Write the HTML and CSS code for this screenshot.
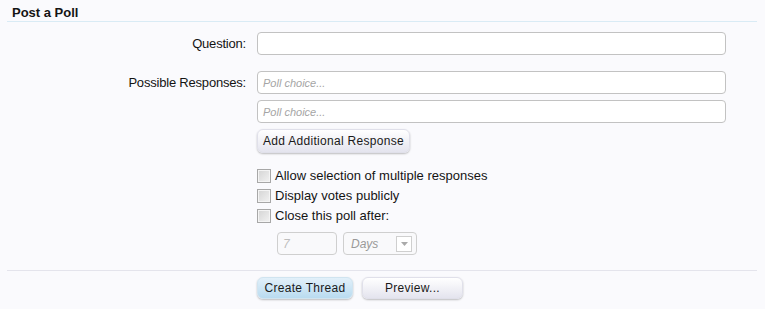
FILE: index.html
```html
<!DOCTYPE html>
<html>
<head>
<meta charset="utf-8">
<link rel="stylesheet" href="styles.css">
</head>
<body>
<div class="page">
  <h3 class="heading">Post a Poll</h3>
  <div class="form">
    <div class="row q-row">
      <label class="lbl">Question:</label>
      <div class="ctrl"><div class="input"></div></div>
    </div>
    <div class="row r-row">
      <label class="lbl">Possible Responses:</label>
      <div class="ctrl">
        <div class="input"><span class="ph">Poll choice...</span></div>
        <div class="input second"><span class="ph">Poll choice...</span></div>
        <div class="btn add">Add Additional Response</div>
        <div class="checks">
          <div class="check"><span class="box"></span>Allow selection of multiple responses</div>
          <div class="check"><span class="box"></span>Display votes publicly</div>
          <div class="check"><span class="box"></span>Close this poll after:</div>
        </div>
        <div class="after">
          <div class="input num"><span class="ph up">7</span></div>
          <div class="input sel"><span class="ph">Days</span><span class="arrow"><svg width="7" height="4" viewBox="0 0 7 4"><path d="M0 0h7L3.5 4z" fill="#aaa"/></svg></span></div>
        </div>
      </div>
    </div>
  </div>
  <div class="submit">
    <div class="btn primary">Create Thread</div>
    <div class="btn preview">Preview...</div>
  </div>
</div>
</body>
</html>
```
FILE: styles.css
```css
html, body { margin: 0; padding: 0; }
body {
  background: #fafafd;
  font-family: "Liberation Sans", Arial, sans-serif;
  font-size: 13px;
  color: #141414;
  width: 765px;
  height: 309px;
  overflow: hidden;
}
.page { padding: 0 8px 0 7px; }
.heading {
  margin: 0;
  font-size: 13px;
  font-weight: bold;
  padding: 5px 0 0 5px;
  height: 16px;
  border-bottom: 1px solid #d9ebf5;
}
.form { padding-top: 10px; }
.row {
  display: grid;
  grid-template-columns: 239px 1fr;
  column-gap: 11px;
}
.lbl {
  text-align: right;
  line-height: 23px;
  letter-spacing: -0.2px;
}
.ctrl { padding-right: 31px; }
.r-row { margin-top: 16px; }
.input {
  box-sizing: border-box;
  height: 23px;
  background: #fff;
  border: 1px solid #c2c2c2;
  border-radius: 4px;
  padding-left: 5px;
  display: flex;
  align-items: center;
}
.input.second { margin-top: 6px; }
.ph {
  font-style: italic;
  font-size: 11px;
  color: #a5a5a5;
}
.btn {
  box-sizing: border-box;
  display: inline-flex;
  align-items: center;
  justify-content: center;
  border-radius: 6px;
  border: 1px solid #e0e0ea;
  background: linear-gradient(#ffffff, #e4e4ee);
  box-shadow: 0 1px 2px rgba(0,0,0,0.25);
  font-size: 12px;
  letter-spacing: 0.3px;
  color: #1a1a1a;
}
.add { margin-top: 6px; height: 24px; width: 153px; }
.checks { margin-top: 13px; }
.check {
  display: flex;
  align-items: center;
  height: 20px;
  line-height: 20px;
}
.box {
  box-sizing: border-box;
  width: 14px;
  height: 14px;
  border: 1px solid #a7a7a7;
  background: linear-gradient(135deg, #d4d4d4, #f2f2f2);
  box-shadow: inset 0 0 0 1px #f4f4f4;
  margin-right: 4px;
}
.after {
  display: flex;
  gap: 6px;
  padding-left: 20px;
  margin-top: 6px;
}
.num { width: 60px; background: #f9f9fb; border-color: #cfcfcf; }
.up { font-style: italic; font-size: 12px; color: #bdbdbd; }
.sel { width: 74px; background: #f9f9fb; border-color: #cfcfcf; padding-left: 7px; justify-content: space-between; padding-right: 4px; }
.sel .ph { font-size: 12px; color: #999; }
.arrow {
  box-sizing: border-box;
  width: 16px; height: 16px;
  border: 1px solid #cfcfcf;
  background: #fff;
  display: flex; align-items: center; justify-content: center;
}
.submit {
  margin-top: 15px;
  border-top: 1px solid #e4e4ec;
  padding: 6px 0 0 250px;
  display: flex;
  gap: 9px;
}
.primary {
  width: 96px; height: 22px;
  background: linear-gradient(#e2f0fa, #b9dbf0);
  border-color: #d0e4f0;
}
.preview { width: 101px; height: 22px; }
```
